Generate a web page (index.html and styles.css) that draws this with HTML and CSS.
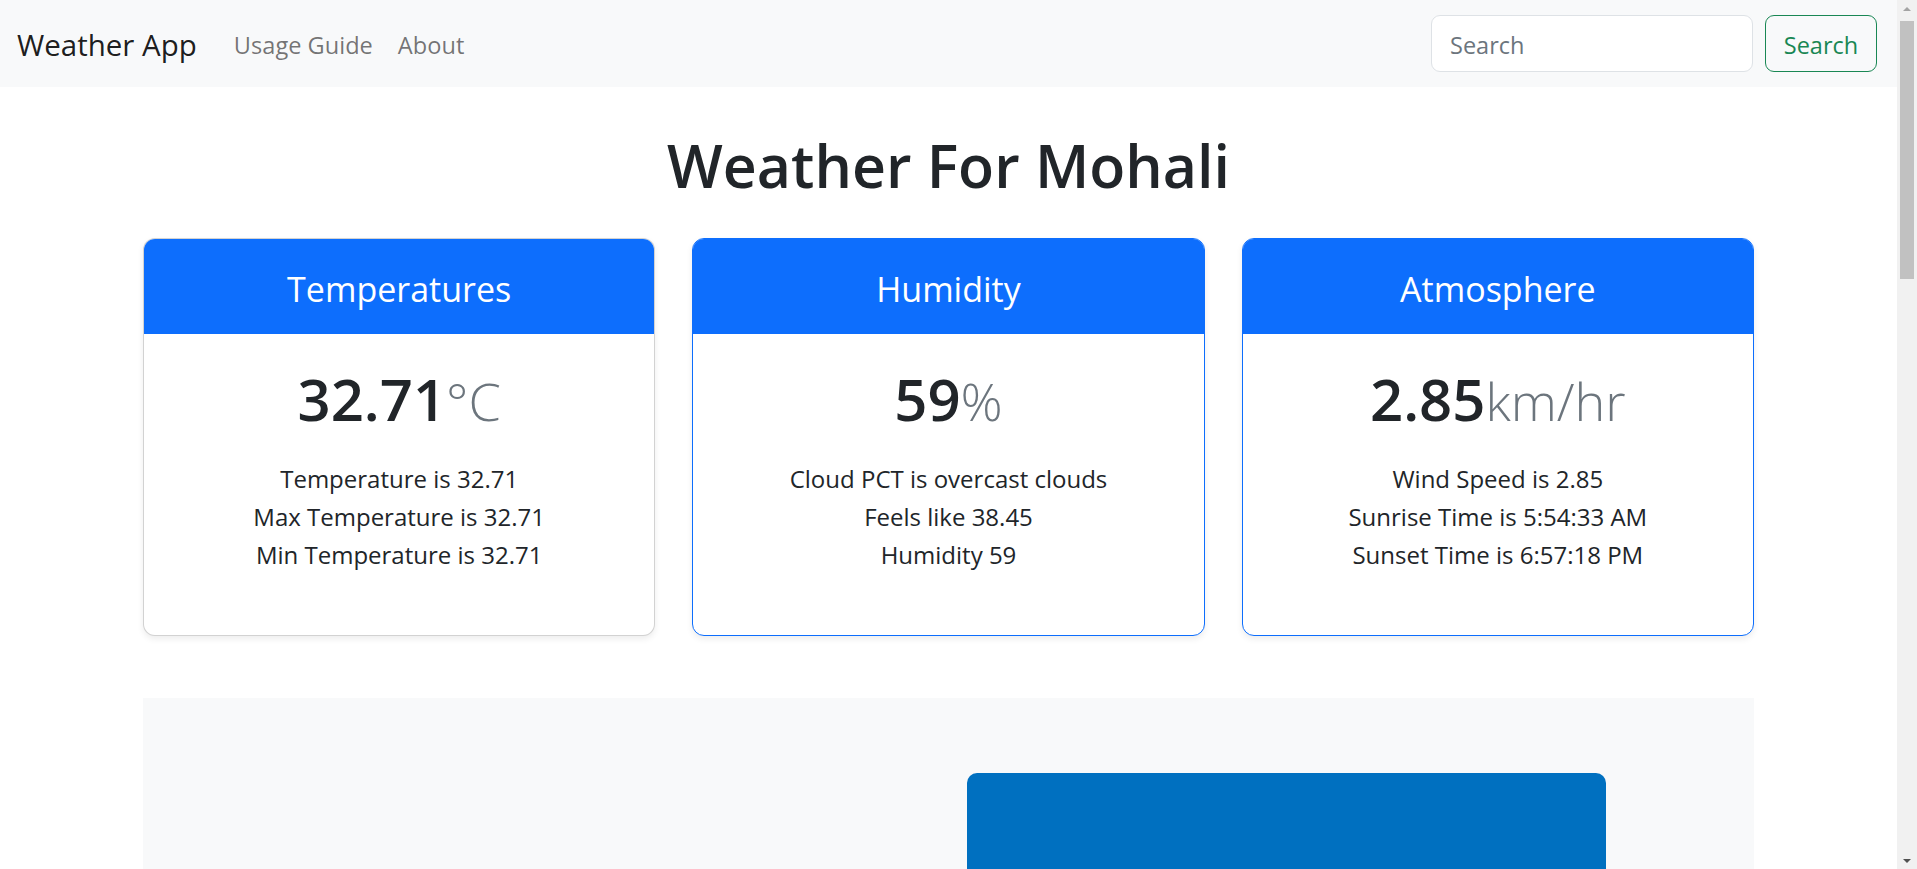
FILE: index.html
```html
<!DOCTYPE html>
<html lang="en">
<head>
<meta charset="utf-8">
<title>Weather App</title>
<link rel="stylesheet" href="styles.css">
</head>
<body>
<div class="viewport">
  <div class="page">
    <nav class="navbar">
      <a class="brand" href="#">Weather App</a>
      <ul class="nav-links">
        <li><a href="#">Usage Guide</a></li>
        <li><a href="#">About</a></li>
      </ul>
      <form class="search-form">
        <input class="search-input" type="search" placeholder="Search">
        <button class="search-btn" type="button">Search</button>
      </form>
    </nav>

    <main class="container">
      <h1 class="page-title">Weather For Mohali</h1>

      <div class="cards">
        <div class="card card-plain">
          <div class="card-header"><h4>Temperatures</h4></div>
          <div class="card-body">
            <div class="big-value">32.71<small>°C</small></div>
            <ul class="facts">
              <li>Temperature is 32.71</li>
              <li>Max Temperature is 32.71</li>
              <li>Min Temperature is 32.71</li>
            </ul>
          </div>
        </div>
        <div class="card card-primary">
          <div class="card-header"><h4>Humidity</h4></div>
          <div class="card-body">
            <div class="big-value">59<small>%</small></div>
            <ul class="facts">
              <li>Cloud PCT is overcast clouds</li>
              <li>Feels like 38.45</li>
              <li>Humidity 59</li>
            </ul>
          </div>
        </div>
        <div class="card card-primary">
          <div class="card-header"><h4>Atmosphere</h4></div>
          <div class="card-body">
            <div class="big-value">2.85<small>km/hr</small></div>
            <ul class="facts">
              <li>Wind Speed is 2.85</li>
              <li>Sunrise Time is 5:54:33 AM</li>
              <li>Sunset Time is 6:57:18 PM</li>
            </ul>
          </div>
        </div>
      </div>

      <section class="widget-area">
        <div class="widget-box"></div>
      </section>
    </main>
  </div>

  <div class="scrollbar">
    <div class="sb-arrow sb-up"></div>
    <div class="sb-track"><div class="sb-thumb"></div></div>
    <div class="sb-arrow sb-down"></div>
  </div>
</div>
</body>
</html>
```

FILE: styles.css
```css
* { box-sizing: border-box; }

html, body {
  margin: 0;
  padding: 0;
  height: 100%;
  overflow: hidden;
}

body {
  font-family: "Open Sans", "Noto Sans", "Liberation Sans", sans-serif;
  font-size: 24px;
  line-height: 1.5;
  color: #212529;
  background: #fff;
}

.viewport {
  display: flex;
  height: 869px;
}

.page {
  flex: 1;
  min-width: 0;
  height: 869px;
  overflow: hidden;
}

/* NAVBAR */
.navbar {
  height: 87px;
  background: #f8f9fa;
  display: flex;
  align-items: center;
  padding: 0 20px 0 17px;
}

.brand {
  font-size: 29.5px;
  color: rgba(0, 0, 0, 0.9);
  text-decoration: none;
  margin-right: 37px;
  padding-top: 3px;
}

.nav-links {
  list-style: none;
  margin: 0;
  padding: 3px 0 0;
  display: flex;
  gap: 25px;
}

.nav-links a {
  color: rgba(0, 0, 0, 0.55);
  text-decoration: none;
  font-size: 23.6px;
}

.search-form {
  margin-left: auto;
  display: flex;
  gap: 12px;
}

.search-input {
  width: 322px;
  height: 57px;
  border: 1px solid #dee2e6;
  border-radius: 9px;
  padding: 3px 18px 0;
  font-family: inherit;
  font-size: 23.5px;
  color: #212529;
  background: #fff;
  outline: none;
}

.search-input::placeholder {
  color: #6c757d;
}

.search-btn {
  height: 57px;
  width: 112px;
  border: 1px solid #198754;
  border-radius: 9px;
  background: transparent;
  color: #198754;
  font-family: inherit;
  font-size: 23.5px;
  padding: 3px 0 0;
}

/* MAIN */
.container {
  width: 1611px;
  margin: 0 auto;
}

.page-title {
  margin: 42px 0 37px;
  text-align: center;
  font-size: 59px;
  font-weight: 600;
  line-height: 72px;
}

.cards {
  display: grid;
  grid-template-columns: repeat(3, 1fr);
  gap: 37px;
}

.card {
  height: 398px;
  border-radius: 12px;
  border: 1px solid rgba(0, 0, 0, 0.175);
  overflow: hidden;
  background: #fff;
  box-shadow: 0 3px 6px rgba(0, 0, 0, 0.075);
  text-align: center;
}

.card-primary {
  border-color: #0d6efd;
}

.card-header {
  height: 95px;
  padding-top: 5px;
  background: #0d6efd;
  color: #fff;
  display: flex;
  align-items: center;
  justify-content: center;
}

.card-header h4 {
  margin: 0;
  font-size: 34px;
  font-weight: 400;
  line-height: 1.2;
}

.card-body {
  padding: 28px 24px 24px;
}

.big-value {
  font-size: 58px;
  font-weight: 600;
  line-height: 74px;
}

.big-value small {
  font-size: 0.9em;
  font-weight: 300;
  color: #6c757d;
}

.facts {
  list-style: none;
  margin: 22px 0 0;
  padding: 0;
  line-height: 38px;
}

/* LOWER WIDGET */
.widget-area {
  margin-top: 62px;
  height: 320px;
  background: #f8f9fa;
  display: flex;
  justify-content: flex-end;
  align-items: flex-start;
  padding: 75px 148px 0 0;
}

.widget-box {
  width: 639px;
  height: 260px;
  background: #0070c0;
  border-radius: 10px 10px 0 0;
}

/* SCROLLBAR */
.scrollbar {
  width: 20px;
  height: 869px;
  background: #f1f1f1;
  display: flex;
  flex-direction: column;
}

.sb-arrow {
  height: 17px;
  display: flex;
  align-items: center;
  justify-content: center;
}

.sb-up::before {
  content: "";
  border-left: 4px solid transparent;
  border-right: 4px solid transparent;
  border-bottom: 4px solid #a3a3a3;
}

.sb-down::before {
  content: "";
  border-left: 4px solid transparent;
  border-right: 4px solid transparent;
  border-top: 4px solid #505050;
}

.sb-track {
  flex: 1;
  padding: 4px 3px 0;
}

.sb-thumb {
  height: 258px;
  background: #c1c1c1;
}
```
